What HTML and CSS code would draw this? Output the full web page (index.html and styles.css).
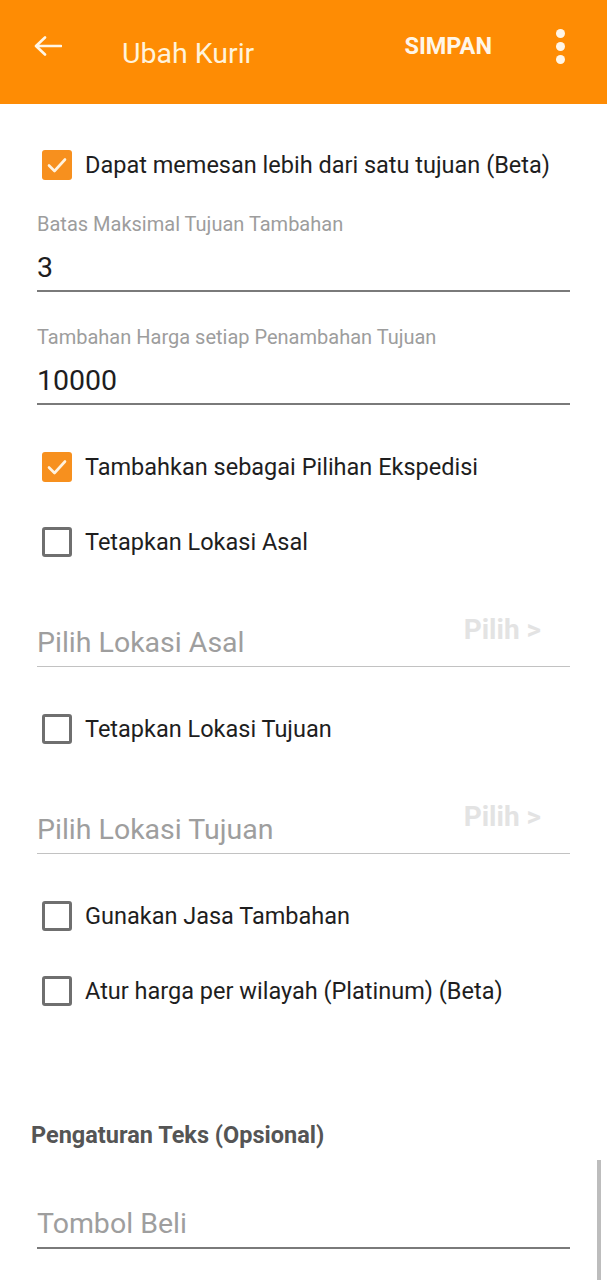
FILE: index.html
```html
<!DOCTYPE html>
<html lang="id">
  <head>
    <meta charset="UTF-8" />
    <meta name="viewport" content="width=device-width, initial-scale=1.0" />
    <link rel="stylesheet" href="styles.css">
    <title>Ubah Kurir</title>
  </head>
  <body>
    <header class="appbar">
      <svg class="back" width="28" height="20" viewBox="0 0 28 20">
        <path d="M27 10H3M11 1.5L2 10l9 8.5" fill="none" stroke="#fff6e6" stroke-width="2.6" stroke-linecap="round" stroke-linejoin="round" />
      </svg>
      <h1 class="title">Ubah Kurir</h1>
      <span class="save">SIMPAN</span>
      <div class="more">
        <span></span><span></span><span></span>
      </div>
    </header>

    <main class="form">
      <label class="check first">
        <span class="box on">
          <svg width="20" height="16" viewBox="0 0 20 16"><path d="M2 8.5l5.5 5.5L18 2.5" fill="none" stroke="#fff3e0" stroke-width="2.6" stroke-linecap="round" stroke-linejoin="round" /></svg>
        </span>
        Dapat memesan lebih dari satu tujuan (Beta)
      </label>

      <div class="field f1">
        <div class="label">Batas Maksimal Tujuan Tambahan</div>
        <div class="value">3</div>
      </div>

      <div class="field f2">
        <div class="label">Tambahan Harga setiap Penambahan Tujuan</div>
        <div class="value">10000</div>
      </div>

      <label class="check gap-lg">
        <span class="box on">
          <svg width="20" height="16" viewBox="0 0 20 16"><path d="M2 8.5l5.5 5.5L18 2.5" fill="none" stroke="#fff3e0" stroke-width="2.6" stroke-linecap="round" stroke-linejoin="round" /></svg>
        </span>
        Tambahkan sebagai Pilihan Ekspedisi
      </label>

      <label class="check gap-md">
        <span class="box"></span>
        Tetapkan Lokasi Asal
      </label>

      <div class="picker">
        <span class="placeholder">Pilih Lokasi Asal</span>
        <span class="pick">Pilih &gt;</span>
      </div>

      <label class="check gap-lg">
        <span class="box"></span>
        Tetapkan Lokasi Tujuan
      </label>

      <div class="picker">
        <span class="placeholder">Pilih Lokasi Tujuan</span>
        <span class="pick">Pilih &gt;</span>
      </div>

      <label class="check gap-lg">
        <span class="box"></span>
        Gunakan Jasa Tambahan
      </label>

      <label class="check gap-md">
        <span class="box"></span>
        Atur harga per wilayah (Platinum) (Beta)
      </label>

      <h2 class="section">Pengaturan Teks (Opsional)</h2>

      <div class="text-input">
        <span class="placeholder">Tombol Beli</span>
      </div>
    </main>

    <div class="scrollbar"></div>
  </body>
</html>
```

FILE: styles.css
```css
body {
  margin: 0;
  font-family: Roboto, "Noto Sans", sans-serif;
  background: #fff;
  color: #212121;
}

.appbar {
  height: 104px;
  background-color: #fe8c04;
  display: flex;
  align-items: center;
  padding: 0 0 12px 34px;
  box-sizing: border-box;
}

.back {
  flex: none;
}

.title {
  margin: 0 0 0 60px;
  font-size: 28.5px;
  font-weight: 400;
  color: #fff3dc;
  position: relative;
  top: 7px;
  flex: 1;
}

.save {
  font-size: 23.5px;
  font-weight: 700;
  color: #fff6e8;
  margin-right: 64px;
}

.more {
  display: flex;
  flex-direction: column;
  gap: 4px;
  margin-right: 42px;
}

.more span {
  width: 9px;
  height: 9px;
  border-radius: 50%;
  background: #fff6e8;
}

.form {
  padding: 0 37px;
}

.check {
  display: flex;
  align-items: center;
  height: 30px;
  padding-left: 5px;
  font-size: 23.5px;
  color: #1e1e1e;
}

.check.first {
  margin-top: 46px;
}

.check.gap-lg {
  margin-top: 47px;
}

.check.gap-md {
  margin-top: 45px;
}

.box {
  width: 30px;
  height: 30px;
  box-sizing: border-box;
  border: 3px solid #6f6f6f;
  border-radius: 3px;
  margin-right: 13px;
  display: flex;
  align-items: center;
  justify-content: center;
  flex: none;
}

.box.on {
  border: none;
  background: #f7901e;
}

.field .label {
  font-size: 20px;
  line-height: 24px;
  color: #9d9d9d;
}

.field .value {
  margin-top: 16px;
  font-size: 28.5px;
  line-height: 32px;
  padding-bottom: 6px;
  border-bottom: 2px solid #7a7a7a;
  color: #1e1e1e;
}

.field.f1 {
  margin-top: 32px;
}

.field.f2 {
  margin-top: 33px;
}

.picker {
  display: flex;
  justify-content: space-between;
  align-items: flex-start;
  margin-top: 69px;
  padding-bottom: 6px;
  border-bottom: 1.5px solid #c2c2c2;
}

.placeholder {
  font-size: 28.5px;
  line-height: 34px;
  color: #9e9e9e;
}

.pick {
  font-size: 28px;
  font-weight: 700;
  line-height: 28px;
  color: #e3e3e3;
  margin: -10px 29px 0 0;
}

.section {
  margin: 116px 0 0 -6px;
  font-size: 23.5px;
  line-height: 26px;
  font-weight: 700;
  color: #555;
}

.text-input {
  margin-top: 59px;
  padding-bottom: 6px;
  border-bottom: 2px solid #7a7a7a;
}

.scrollbar {
  position: fixed;
  right: 6px;
  top: 1160px;
  width: 4px;
  height: 120px;
  background: #bdbdbd;
}
```
